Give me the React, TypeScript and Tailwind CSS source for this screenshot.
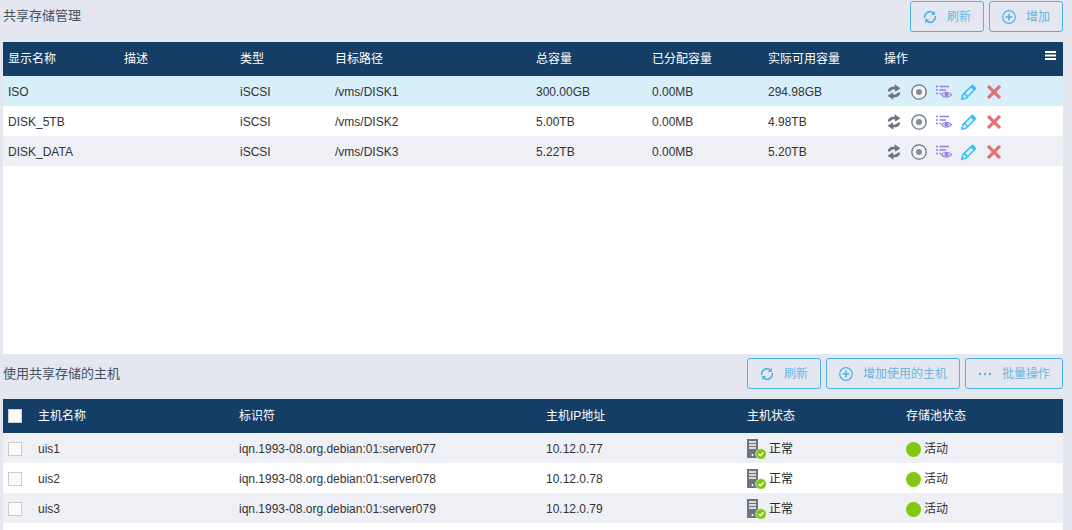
import React from 'react';

const STORAGE = [
  { name: 'ISO', type: 'iSCSI', path: '/vms/DISK1', total: '300.00GB', used: '0.00MB', free: '294.98GB', bg: 'bg-[#d6eff8]' },
  { name: 'DISK_5TB', type: 'iSCSI', path: '/vms/DISK2', total: '5.00TB', used: '0.00MB', free: '4.98TB', bg: 'bg-white' },
  { name: 'DISK_DATA', type: 'iSCSI', path: '/vms/DISK3', total: '5.22TB', used: '0.00MB', free: '5.20TB', bg: 'bg-[#eff0f5]' }
];

const HOSTS = [
  { name: 'uis1', iqn: 'iqn.1993-08.org.debian:01:server077', ip: '10.12.0.77', bg: 'bg-[#eff0f5]' },
  { name: 'uis2', iqn: 'iqn.1993-08.org.debian:01:server078', ip: '10.12.0.78', bg: 'bg-white' },
  { name: 'uis3', iqn: 'iqn.1993-08.org.debian:01:server079', ip: '10.12.0.79', bg: 'bg-[#eff0f5]' }
];

const STORAGE_COLS = 'grid grid-cols-[116px_116px_95px_201px_116px_116px_116px_1fr] pl-[5px] items-center';
const HOST_COLS = 'grid grid-cols-[30px_201px_307px_201px_159px_1fr] pl-[5px] items-center';

const RefreshIcon = () => (
  <svg width="14" height="14" viewBox="0 0 14 14" fill="none" stroke="#4db3e4" strokeWidth="1.6">
    <path d="M1.8 8.2A5.3 5.3 0 0 1 10.4 3" />
    <path d="M12.2 5.8A5.3 5.3 0 0 1 3.6 11" />
    <path d="M11.8 .8V5H7.8" fill="#4db3e4" stroke="none" />
    <path d="M2.2 13.2V9H6.2" fill="#4db3e4" stroke="none" />
  </svg>
);

const PlusIcon = () => (
  <svg width="14" height="14" viewBox="0 0 14 14" fill="none" stroke="#4db3e4" strokeWidth="1.2">
    <circle cx="7" cy="7" r="6.3" />
    <path d="M7 3.5V10.5M3.5 7H10.5" strokeWidth="1.5" />
  </svg>
);

const DotsIcon = () => (
  <svg width="14" height="14" viewBox="0 0 14 14" fill="#4db3e4">
    <circle cx="2" cy="7" r="1.2" />
    <circle cx="7" cy="7" r="1.2" />
    <circle cx="12" cy="7" r="1.2" />
  </svg>
);

const ToolButton = ({ icon, label, width }: { icon: React.ReactNode; label: string; width: string }) => (
  <button className={`${width} h-[31px] flex items-center pl-[12px] border border-[#4db3e4] rounded-[3px] text-xs text-[#69b6e2]`}>
    <span className="w-[14px] h-[14px] mr-[10px] shrink-0">{icon}</span>
    {label}
  </button>
);

const SyncIcon = () => (
  <svg width="14" height="16" viewBox="0 0 14 16" fill="#6d7480">
    <path d="M.8 7.4C1 4 4 2.2 7.6 2.8L7.6 .2 13.4 4.2 8.2 7.8 8 5.4C6 5.1 4.2 5.8 3.2 7.4Z" />
    <path d="M13.2 8.6C13 12 10 13.8 6.4 13.2L6.4 15.8 .6 11.8 5.8 8.2 6 10.6C8 10.9 9.8 10.2 10.8 8.6Z" />
  </svg>
);

const TargetIcon = () => (
  <svg width="16" height="16" viewBox="0 0 16 16" fill="none">
    <circle cx="8" cy="8" r="7.2" stroke="#6d7480" strokeWidth="1.3" fill="#f6f7f9" />
    <circle cx="8" cy="8" r="3" fill="#868d99" />
  </svg>
);

const ListEyeIcon = () => (
  <svg width="16" height="14" viewBox="0 0 16 14" fill="none" stroke="#9a7ee0">
    <path d="M0 1.5H2M3.5 1.5H13M0 5H2M3.5 5H10M0 8.5H2M3.5 8.5H5" strokeWidth="1.7" />
    <path d="M5.5 9.6C7.8 6.4 12.8 6.4 15.6 9.6C12.8 13 7.8 13 5.5 9.6Z" strokeWidth="1.1" fill="#e7e2f8" />
    <circle cx="10.5" cy="9.6" r="2" fill="#9a7ee0" stroke="none" />
  </svg>
);

const PencilIcon = () => (
  <svg width="16" height="16" viewBox="0 0 16 16" fill="none" stroke="#3fbdf0" strokeWidth="1.5">
    <path d="M.8 15.2L1.8 10.6L11.4 1.4L14.6 4.6L5.4 14Z" strokeLinejoin="round" fill="#d8f2fc" />
    <path d="M10.4 2.4L13.6 5.6" strokeWidth="2.4" />
    <path d="M3.4 9.4L6.6 12.6" />
  </svg>
);

const CloseIcon = () => (
  <svg width="14" height="14" viewBox="0 0 14 14" stroke="#df7278" strokeWidth="3.2">
    <path d="M1 1L13 13M13 1L1 13" />
  </svg>
);

const Actions = () => (
  <div className="flex items-center">
    <span className="w-[14px] h-4 ml-[3px] mr-[10px]"><SyncIcon /></span>
    <span className="w-4 h-4 mr-[9px]"><TargetIcon /></span>
    <span className="w-4 h-[14px] mr-[9px]"><ListEyeIcon /></span>
    <span className="w-4 h-4 mr-[10px]"><PencilIcon /></span>
    <span className="w-[14px] h-[14px]"><CloseIcon /></span>
  </div>
);

const ServerIcon = () => (
  <svg width="20" height="20" viewBox="0 0 20 20">
    <rect x="0" y="0" width="11" height="19" fill="#6d7480" />
    <path d="M2 3H9M2 6H9M2 9H9" stroke="#fff" strokeWidth="1.4" />
    <circle cx="5.5" cy="16" r="1" fill="#fff" />
    <circle cx="14" cy="15" r="5.4" fill="#84c713" stroke="#fff" strokeWidth="0.6" />
    <path d="M11.6 15L13.4 16.8L16.4 13.4" stroke="#fff" strokeWidth="1.4" fill="none" />
  </svg>
);

const CheckBox = ({ bg }: { bg: string }) => (
  <span className={`block w-[14px] h-[14px] border border-[#cccccc] ${bg}`} />
);

export default function App() {
  return (
    <div className="h-[530px] overflow-hidden bg-[#e4e7f0] pl-[3px] pr-[9px] text-xs text-[#333333] font-['Liberation_Sans','Noto_Sans_CJK_SC',sans-serif]">
      <div className="h-[42px] flex justify-between pt-px">
        <div className="text-[13px] leading-[31px] -mt-px text-[#44525f]">共享存储管理</div>
        <div className="flex gap-[5px]">
          <ToolButton icon={<RefreshIcon />} label="刷新" width="w-[74px]" />
          <ToolButton icon={<PlusIcon />} label="增加" width="w-[74px]" />
        </div>
      </div>

      <div className={`${STORAGE_COLS} relative h-[34px] bg-[#153e66] text-white`}>
        <span>显示名称</span>
        <span>描述</span>
        <span>类型</span>
        <span>目标路径</span>
        <span>总容量</span>
        <span>已分配容量</span>
        <span>实际可用容量</span>
        <span>操作</span>
        <svg className="absolute right-[7px] top-[9px]" width="11" height="9" viewBox="0 0 11 9" fill="#fff">
          <rect width="11" height="2" />
          <rect y="3.5" width="11" height="2" />
          <rect y="7" width="11" height="2" />
        </svg>
      </div>
      <div className="h-[278px] bg-white">
        {STORAGE.map(row => (
          <div key={row.name} className={`${STORAGE_COLS} h-[30px] pt-[2px] ${row.bg}`}>
            <span>{row.name}</span>
            <span />
            <span>{row.type}</span>
            <span>{row.path}</span>
            <span>{row.total}</span>
            <span>{row.used}</span>
            <span>{row.free}</span>
            <Actions />
          </div>
        ))}
      </div>

      <div className="h-[45px] flex justify-between pt-1">
        <div className="text-[13px] leading-[31px] text-[#44525f]">使用共享存储的主机</div>
        <div className="flex gap-[5px]">
          <ToolButton icon={<RefreshIcon />} label="刷新" width="w-[74px]" />
          <ToolButton icon={<PlusIcon />} label="增加使用的主机" width="w-[134px]" />
          <ToolButton icon={<DotsIcon />} label="批量操作" width="w-[98px]" />
        </div>
      </div>

      <div className={`${HOST_COLS} h-[34px] bg-[#153e66] text-white`}>
        <CheckBox bg="bg-[#fafafa]" />
        <span>主机名称</span>
        <span>标识符</span>
        <span>主机IP地址</span>
        <span>主机状态</span>
        <span>存储池状态</span>
      </div>
      <div className="h-[97px] bg-white">
        {HOSTS.map(row => (
          <div key={row.name} className={`${HOST_COLS} h-[30px] pt-[2px] ${row.bg}`}>
            <CheckBox bg="bg-[#fafafa]" />
            <span>{row.name}</span>
            <span>{row.iqn}</span>
            <span>{row.ip}</span>
            <span className="flex items-center text-[#222222]">
              <span className="w-[22px] h-5"><ServerIcon /></span>
              正常
            </span>
            <span className="flex items-center">
              <span className="w-[15px] h-[15px] rounded-full bg-[#84c713] mr-[3px]" />
              活动
            </span>
          </div>
        ))}
      </div>
    </div>
  );
}
